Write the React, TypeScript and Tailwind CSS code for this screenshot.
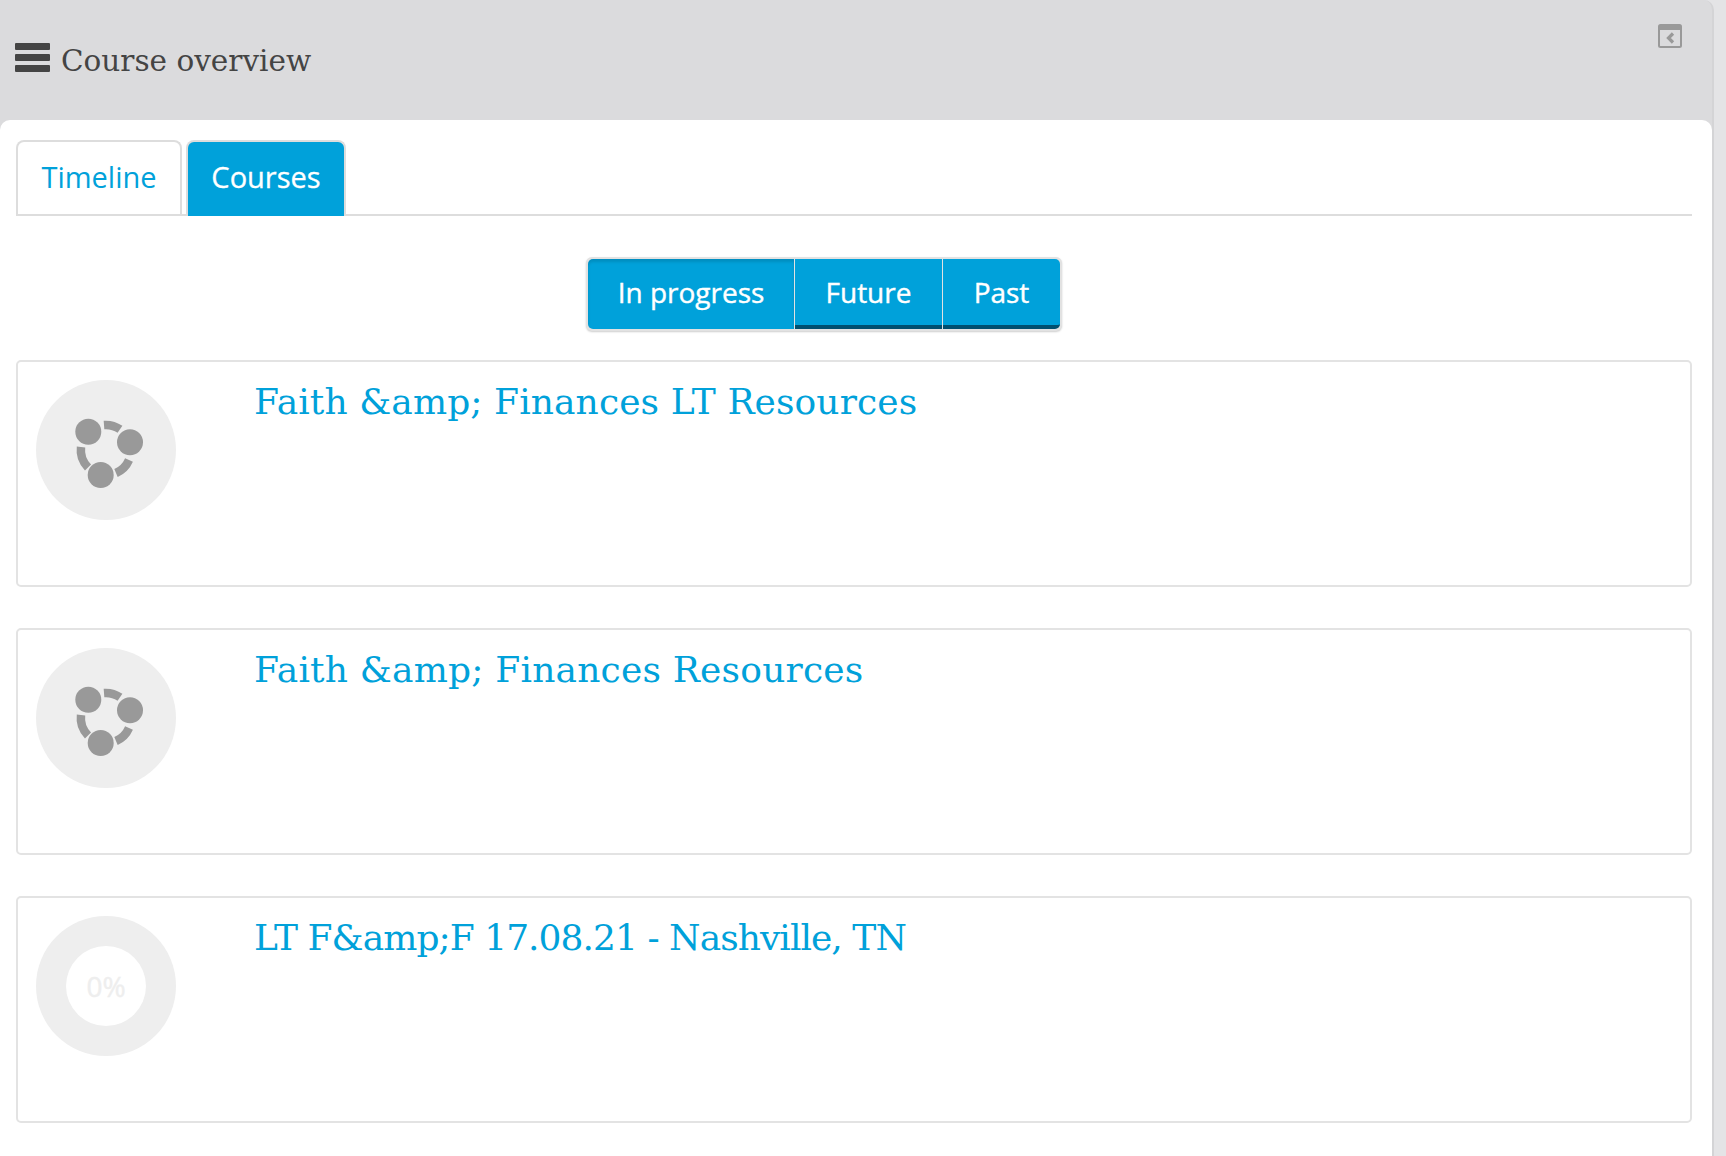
import React from 'react';

const slab = 'font-["DejaVu_Serif",serif]';
const sans = 'font-["Open_Sans",sans-serif]';

const courses = [
  { title: 'Faith &amp; Finances LT Resources', progress: false, spacing: 'tracking-[0.1px]' },
  { title: 'Faith &amp; Finances Resources', progress: false, spacing: 'tracking-[0.2px]' },
  { title: 'LT F&amp;F 17.08.21 - Nashville, TN', progress: true, spacing: 'tracking-[-0.95px]' },
];

function CourseIcon() {
  return (
    <svg width="140" height="140" viewBox="0 0 140 140" fill="none">
      <g stroke="#999999" strokeWidth="8.5">
        <path d="M68 45 A25 25 0 0 1 84 49.3" />
        <path d="M93 80 A25 25 0 0 1 80 93" />
        <path d="M45 67 A25 25 0 0 0 52 87.4" />
      </g>
      <g fill="#999999">
        <circle cx="52.3" cy="51.7" r="13" />
        <circle cx="94" cy="62.3" r="13" />
        <circle cx="64.7" cy="95" r="13" />
      </g>
    </svg>
  );
}

function CourseCard({ title, progress, spacing }: { title: string; progress: boolean; spacing: string }) {
  return (
    <div className="flex h-[227px] rounded-[5px] border-2 border-[#e3e3e3] pl-[18px] pt-[18px]">
      <div className="flex size-[140px] shrink-0 items-center justify-center rounded-full bg-[#eeeeee]">
        {progress ? (
          <div className={`flex size-[80px] items-center justify-center rounded-full bg-white text-[28px] text-[#eeeeee] [-webkit-text-stroke:0.4px_#eeeeee] ${sans}`}>
            0%
          </div>
        ) : (
          <CourseIcon />
        )}
      </div>
      <a className={`ml-[78px] h-fit pt-[1px] text-[36px] leading-[42px] text-[#00a1da] ${spacing} ${slab}`}>{title}</a>
    </div>
  );
}

export default function App() {
  return (
    <div className="flex min-h-[1156px] w-full bg-[#e4e4e6]">
      <div className="flex w-[1714px] flex-col rounded-tr-[10px] border-r-2 border-[#d4d4d6] bg-[#dbdbdd]">
        <header className="relative flex h-[120px] shrink-0 items-center pl-[15px]">
          <svg width="35" height="29" viewBox="0 0 35 29" className="mb-[5px]">
            <g fill="#444444">
              <rect x="0" y="0" width="35" height="7" rx="1" />
              <rect x="0" y="11" width="35" height="7" rx="1" />
              <rect x="0" y="22" width="35" height="7" rx="1" />
            </g>
          </svg>
          <h2 className={`ml-[11px] pt-[2px] text-[29.5px] font-normal text-[#444444] ${slab}`}>Course overview</h2>
          {/* dock block button */}
          <svg width="24" height="24" viewBox="0 0 24 24" className="absolute top-[24px] right-[30px]">
            <rect x="1" y="1" width="22" height="22" rx="1.5" fill="none" stroke="#999999" strokeWidth="2" />
            <rect x="1" y="1" width="22" height="5" fill="#999999" />
            <path d="M15 9.5 L10.5 14 L15 18.5" fill="none" stroke="#999999" strokeWidth="3.2" />
          </svg>
        </header>

        <main className="flex-1 rounded-t-[10px] bg-white pr-[20px] pl-[16px] pt-[20px]">
          <nav className={`flex gap-[4px] border-b-2 border-[#dddddd] text-[29px] ${sans}`}>
            <a className="-mb-[2px] flex h-[76px] w-[166px] items-center justify-center rounded-t-[8px] border-2 border-b-0 border-[#dddddd] pb-[4px] text-[#00a1da]">
              Timeline
            </a>
            <a className="-mb-[2px] flex h-[76px] w-[160px] items-center justify-center rounded-t-[8px] border-2 border-b-0 border-[#dddddd] bg-[#00a1da] pb-[4px] text-white [-webkit-text-stroke:0.3px_white]">
              Courses
            </a>
          </nav>

          <div className={`mt-[41px] flex pl-[570px] text-[28px] text-white [-webkit-text-stroke:0.4px_white] ${sans}`}>
            <div className="flex h-[74px] rounded-[6px] border-2 border-[#e2e2e2] bg-[#e2e2e2] shadow-[0_1px_2px_rgba(0,0,0,0.2)]">
              <span className="flex w-[206px] items-center justify-center rounded-l-[5px] bg-[#00a1da] pb-[4px] shadow-[inset_0_3px_3px_rgba(0,0,0,0.12)]">
                In progress
              </span>
              <span className="ml-[1px] flex w-[147px] items-center justify-center border-b-4 border-[#004f6f] bg-[#00a1da]">
                Future
              </span>
              <span className="ml-[1px] flex w-[117px] items-center justify-center rounded-r-[5px] border-b-4 border-[#004f6f] bg-[#00a1da]">
                Past
              </span>
            </div>
          </div>

          <div className="mt-[29px] flex flex-col gap-[41px]">
            {courses.map((course) => (
              <CourseCard key={course.title} title={course.title} progress={course.progress} spacing={course.spacing} />
            ))}
          </div>
        </main>
      </div>
    </div>
  );
}
